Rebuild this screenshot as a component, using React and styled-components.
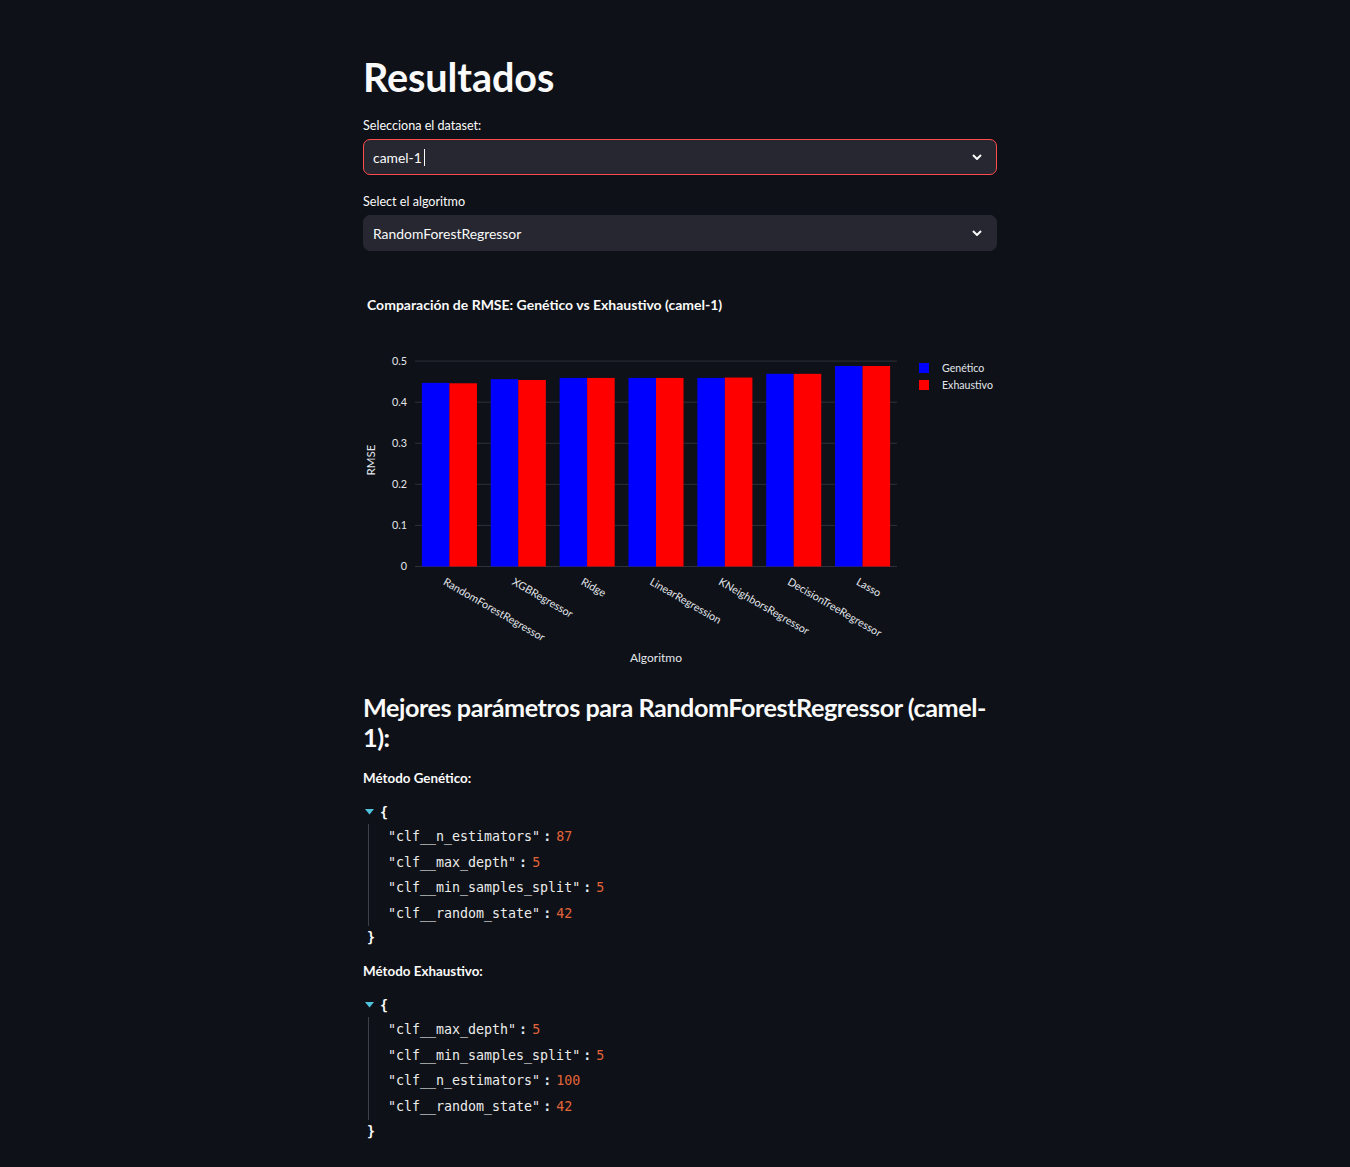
import React from 'react';
import styled, { createGlobalStyle } from 'styled-components';

const GlobalStyle = createGlobalStyle`
  body {
    margin: 0;
    background: #0e1117;
    color: #fafafa;
    font-family: Lato, "Noto Sans", sans-serif;
  }
`

const Page = styled.div`
  min-height: 1167px;
  display: flex;
  justify-content: center;
  padding-left: 10px;
  box-sizing: border-box;
`

const Main = styled.main`
  width: 634px;
  padding-top: 53px;
  display: flex;
  flex-direction: column;
`

const Title = styled.h1`
  margin: 0;
  font-size: 39.6px;
  line-height: 48px;
  font-weight: 700;
  letter-spacing: -0.1px;
`

const Field = styled.div`
  display: flex;
  flex-direction: column;
  gap: 3px;
  margin-top: ${p => p.$top}px;
`

const Label = styled.label`
  font-size: 12.6px;
  line-height: 21px;
  color: #fafafa;
`

const Select = styled.div`
  height: 36px;
  box-sizing: border-box;
  border-radius: 7px;
  background: #262730;
  border: 1px solid ${p => (p.$focused ? '#ff4b4b' : '#262730')};
  display: flex;
  align-items: center;
  justify-content: space-between;
  padding: 0 14px 0 9px;
  font-size: 13.9px;
`

const Value = styled.span`
  display: flex;
  align-items: center;
`

const Caret = styled.span`
  display: inline-block;
  width: 1px;
  height: 17px;
  margin-left: 2px;
  background: #fafafa;
`

const ChartBox = styled.div`
  margin-top: 29px;
  height: 400px;
`

const Subheader = styled.h3`
  margin: 12px 0 0;
  font-size: 25.2px;
  line-height: 30px;
  font-weight: 700;
  letter-spacing: -0.45px;
`

const Method = styled.p`
  margin: ${p => p.$top}px 0 0;
  font-size: 13.4px;
  line-height: 21px;
  font-weight: 700;
`

const JsonBlock = styled.div`
  margin-top: 11.5px;
  font-family: "DejaVu Sans Mono", "Liberation Mono", monospace;
  font-size: 13.3px;
  color: #fafafa;
`

const JsonHead = styled.div`
  height: 23px;
  display: flex;
  align-items: center;
  padding-left: 2px;
  gap: 6px;
`

const Brace = styled.span`
  font-weight: 700;
`

const JsonBody = styled.div`
  margin-left: 5px;
  border-left: 1px solid #3d4048;
  padding-left: 19px;
  display: flex;
  flex-direction: column;
`

const JsonRow = styled.div`
  height: 25.7px;
  display: flex;
  align-items: center;
`

const Key = styled.span`
  color: #ececec;
`

const Colon = styled.span`
  margin: 0 5px 0 3px;
  font-weight: 700;
  color: #dfe8f2;
`

const Num = styled.span`
  color: #e2643a;
`

const JsonClose = styled.div`
  height: 23px;
  display: flex;
  align-items: center;
  padding-left: 4px;
  font-weight: 700;
`

const Chevron = () => (
  <svg width="10" height="6" viewBox="0 0 10 6">
    <path d="M1 1 L5 5 L9 1" fill="none" stroke="#fafafa" strokeWidth="2" />
  </svg>
)

const Toggle = () => (
  <svg width="9" height="6" viewBox="0 0 9 6">
    <path d="M0 0 H9 L4.5 5.5 Z" fill="#4fc3de" />
  </svg>
)

const results = [
  { name: 'RandomForestRegressor', gen: 0.447, exh: 0.446 },
  { name: 'XGBRegressor', gen: 0.456, exh: 0.454 },
  { name: 'Ridge', gen: 0.459, exh: 0.459 },
  { name: 'LinearRegression', gen: 0.459, exh: 0.459 },
  { name: 'KNeighborsRegressor', gen: 0.459, exh: 0.46 },
  { name: 'DecisionTreeRegressor', gen: 0.469, exh: 0.469 },
  { name: 'Lasso', gen: 0.488, exh: 0.488 },
]

const X0 = 52, X1 = 534, Y0 = 286.5, SCALE = 410.8
const GW = (X1 - X0) / results.length
const BW = GW * 0.4
const tickFont = { fontFamily: 'Lato, "Noto Sans", sans-serif', fill: '#e2e6ec' }

const Chart = () => (
  <svg width="634" height="400" viewBox="0 0 634 400">
    <text x="4" y="30" fontSize="14" fontWeight="700" fill="#fafafa" style={{ fontFamily: 'Lato, sans-serif' }}>
      Comparación de RMSE: Genético vs Exhaustivo (camel-1)
    </text>
    {[0, 0.1, 0.2, 0.3, 0.4, 0.5].map(v => {
      const y = Y0 - v * SCALE
      return (
        <g key={v}>
          <line x1={X0} x2={X1} y1={y} y2={y} stroke="#2e3139" strokeWidth="1" />
          <text x="44" y={y + 3.8} fontSize="10.8" textAnchor="end" style={tickFont}>{v === 0 ? '0' : v}</text>
        </g>
      )
    })}
    {results.map((r, i) => {
      const start = X0 + i * GW
      const bx = start + GW * 0.1
      const cx = start + GW / 2
      return (
        <g key={r.name}>
          <rect x={bx} y={Y0 - r.gen * SCALE} width={BW} height={r.gen * SCALE} fill="#0000ff" />
          <rect x={bx + BW} y={Y0 - r.exh * SCALE} width={BW} height={r.exh * SCALE} fill="#ff0000" />
          <text transform={`translate(${cx - 3} 297) rotate(30)`} x="0" y="8" fontSize="10.8" style={tickFont}>
            {r.name}
          </text>
        </g>
      )
    })}
    <text transform="translate(12 180) rotate(-90)" fontSize="11.5" textAnchor="middle" style={tickFont}>RMSE</text>
    <text x="293" y="382" fontSize="12" textAnchor="middle" style={tickFont}>Algoritmo</text>
    <rect x="556" y="83" width="10" height="10" fill="#0000ff" />
    <text x="579" y="92" fontSize="10.6" style={tickFont}>Genético</text>
    <rect x="556" y="100" width="10" height="10" fill="#ff0000" />
    <text x="579" y="109" fontSize="10.6" style={tickFont}>Exhaustivo</text>
  </svg>
)

const JsonView = ({ data }) => (
  <JsonBlock>
    <JsonHead>
      <Toggle />
      <Brace>{'{'}</Brace>
    </JsonHead>
    <JsonBody>
      {data.map(([k, v]) => (
        <JsonRow key={k}>
          <Key>"{k}"</Key>
          <Colon>:</Colon>
          <Num>{v}</Num>
        </JsonRow>
      ))}
    </JsonBody>
    <JsonClose>{'}'}</JsonClose>
  </JsonBlock>
)

const genetic = [
  ['clf__n_estimators', 87],
  ['clf__max_depth', 5],
  ['clf__min_samples_split', 5],
  ['clf__random_state', 42],
]

const exhaustive = [
  ['clf__max_depth', 5],
  ['clf__min_samples_split', 5],
  ['clf__n_estimators', 100],
  ['clf__random_state', 42],
]

export default function App() {
  return (
    <>
      <GlobalStyle />
      <Page>
        <Main>
          <Title>Resultados</Title>
          <Field $top={14}>
            <Label>Selecciona el dataset:</Label>
            <Select $focused>
              <Value>camel-1<Caret /></Value>
              <Chevron />
            </Select>
          </Field>
          <Field $top={16}>
            <Label>Select el algoritmo</Label>
            <Select>
              <Value>RandomForestRegressor</Value>
              <Chevron />
            </Select>
          </Field>
          <ChartBox>
            <Chart />
          </ChartBox>
          <Subheader>Mejores parámetros para RandomForestRegressor (camel-1):</Subheader>
          <Method $top={16}>Método Genético:</Method>
          <JsonView data={genetic} />
          <Method $top={12}>Método Exhaustivo:</Method>
          <JsonView data={exhaustive} />
        </Main>
      </Page>
    </>
  )
}
